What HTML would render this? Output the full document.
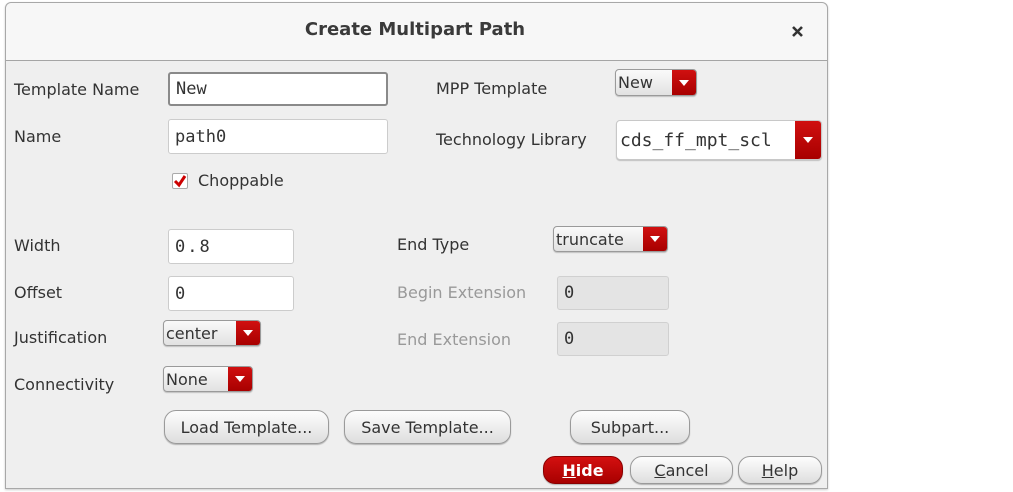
<!DOCTYPE html>
<html><head><meta charset="utf-8"><style>
*{box-sizing:border-box;margin:0;padding:0}
body{width:1013px;height:492px;background:#fff;position:relative;overflow:hidden;font-family:"DejaVu Sans","Liberation Sans",sans-serif;color:#333}
.dlg{position:absolute;left:5px;top:2px;width:823px;height:487px;background:#efefef;border:1px solid #a8a8a8;border-radius:6px 6px 0 0;box-shadow:0 1px 2px rgba(0,0,0,.2)}
.hdr{position:absolute;left:0;top:0;width:821px;height:58px;background:#f7f7f7;border-bottom:1px solid #a5a5a5;border-radius:6px 6px 0 0}
.a{position:absolute}
.lbl{position:absolute;font-size:16px;line-height:18px;white-space:nowrap}
.dis{color:#999}
.inp{position:absolute;background:#fff;border:1px solid #ccc;border-radius:3px;font-family:"DejaVu Sans Mono","Liberation Mono",monospace;font-size:17px;padding-left:6px;display:flex;align-items:center}
.inp.b{border:2px solid #8a8a8a}
.inp.d{background:#e4e4e4;border-color:#d0d0d0}
.dd{position:absolute;border:1px solid #9a9a9a;border-radius:4px;background:linear-gradient(#fafafa,#e2e2e2);font-size:16px;display:flex;align-items:center;padding-left:2px;overflow:hidden;box-shadow:0 1px 1px rgba(0,0,0,.2)}
.dd .r{position:absolute;right:0;top:0;bottom:0;background:linear-gradient(#d01010,#a80000);display:flex;align-items:center;justify-content:center}
.btn{position:absolute;border:1px solid #9a9a9a;border-radius:12px;background:linear-gradient(#fdfdfd,#dedede);font-size:16px;display:flex;align-items:center;justify-content:center;box-shadow:0 1px 1px rgba(0,0,0,.25)}
</style></head><body>
<div class="dlg">
<div class="hdr"></div>
</div>
<div class="lbl" style="left:0;width:830px;text-align:center;top:21px;font-size:18px;font-weight:bold;color:#3a3a3a">Create Multipart Path</div>
<svg class="a" style="left:791px;top:25px" width="13" height="13"><path d="M2 2L11 11M11 2L2 11" stroke="#333" stroke-width="2.6"/></svg>

<div class="lbl" style="left:14px;top:81px">Template Name</div>
<div class="inp b" style="left:168px;top:72px;width:220px;height:34px">New</div>
<div class="lbl" style="left:14px;top:128px">Name</div>
<div class="inp" style="left:168px;top:119px;width:220px;height:35px">path0</div>
<div class="a" style="left:172px;top:173px;width:16px;height:16px;background:#fff;border:1px solid #aaa;border-radius:2px"></div>
<svg class="a" style="left:172px;top:173px" width="16" height="16"><path d="M3 8L7 12L13 3" stroke="#c00" stroke-width="3" fill="none"/></svg>
<div class="lbl" style="left:198px;top:172px">Choppable</div>

<div class="lbl" style="left:436px;top:80px">MPP Template</div>
<div class="dd" style="left:615px;top:69px;width:82px;height:27px">New<div class="r" style="width:24px"><svg width="10" height="6"><path d="M0 0H10L5 6Z" fill="#fff"/></svg></div></div>
<div class="lbl" style="left:436px;top:131px">Technology Library</div>
<div class="dd" style="left:616px;top:120px;width:206px;height:40px;background:#fff;padding-left:3px;font-family:'DejaVu Sans Mono',monospace;font-size:18px;border-color:#c8c8c8">cds_ff_mpt_scl<div class="r" style="width:26px"><svg width="10" height="6"><path d="M0 0H10L5 6Z" fill="#fff"/></svg></div></div>

<div class="lbl" style="left:14px;top:237px">Width</div>
<div class="inp" style="left:168px;top:229px;width:126px;height:35px;letter-spacing:2px">0.8</div>
<div class="lbl" style="left:14px;top:284px">Offset</div>
<div class="inp" style="left:168px;top:276px;width:126px;height:35px">0</div>
<div class="lbl" style="left:14px;top:329px">Justification</div>
<div class="dd" style="left:163px;top:320px;width:98px;height:26px">center<div class="r" style="width:24px"><svg width="10" height="6"><path d="M0 0H10L5 6Z" fill="#fff"/></svg></div></div>
<div class="lbl" style="left:14px;top:376px">Connectivity</div>
<div class="dd" style="left:163px;top:366px;width:90px;height:26px">None<div class="r" style="width:24px"><svg width="10" height="6"><path d="M0 0H10L5 6Z" fill="#fff"/></svg></div></div>

<div class="lbl" style="left:397px;top:236px">End Type</div>
<div class="dd" style="left:553px;top:226px;width:115px;height:26px">truncate<div class="r" style="width:24px"><svg width="10" height="6"><path d="M0 0H10L5 6Z" fill="#fff"/></svg></div></div>
<div class="lbl dis" style="left:397px;top:284px">Begin Extension</div>
<div class="inp d" style="left:557px;top:276px;width:112px;height:34px">0</div>
<div class="lbl dis" style="left:397px;top:331px">End Extension</div>
<div class="inp d" style="left:557px;top:322px;width:112px;height:34px">0</div>

<div class="btn" style="left:164px;top:410px;width:165px;height:34px">Load Template...</div>
<div class="btn" style="left:344px;top:410px;width:167px;height:34px">Save Template...</div>
<div class="btn" style="left:570px;top:410px;width:120px;height:34px">Subpart...</div>
<div class="btn" style="left:543px;top:456px;width:80px;height:28px;background:linear-gradient(#d41010,#a80000);border-color:#8a0000;color:#fff;font-weight:bold"><u>H</u>ide</div>
<div class="btn" style="left:630px;top:456px;width:103px;height:28px"><u>C</u>ancel</div>
<div class="btn" style="left:738px;top:456px;width:84px;height:28px"><u>H</u>elp</div>
</body></html>
